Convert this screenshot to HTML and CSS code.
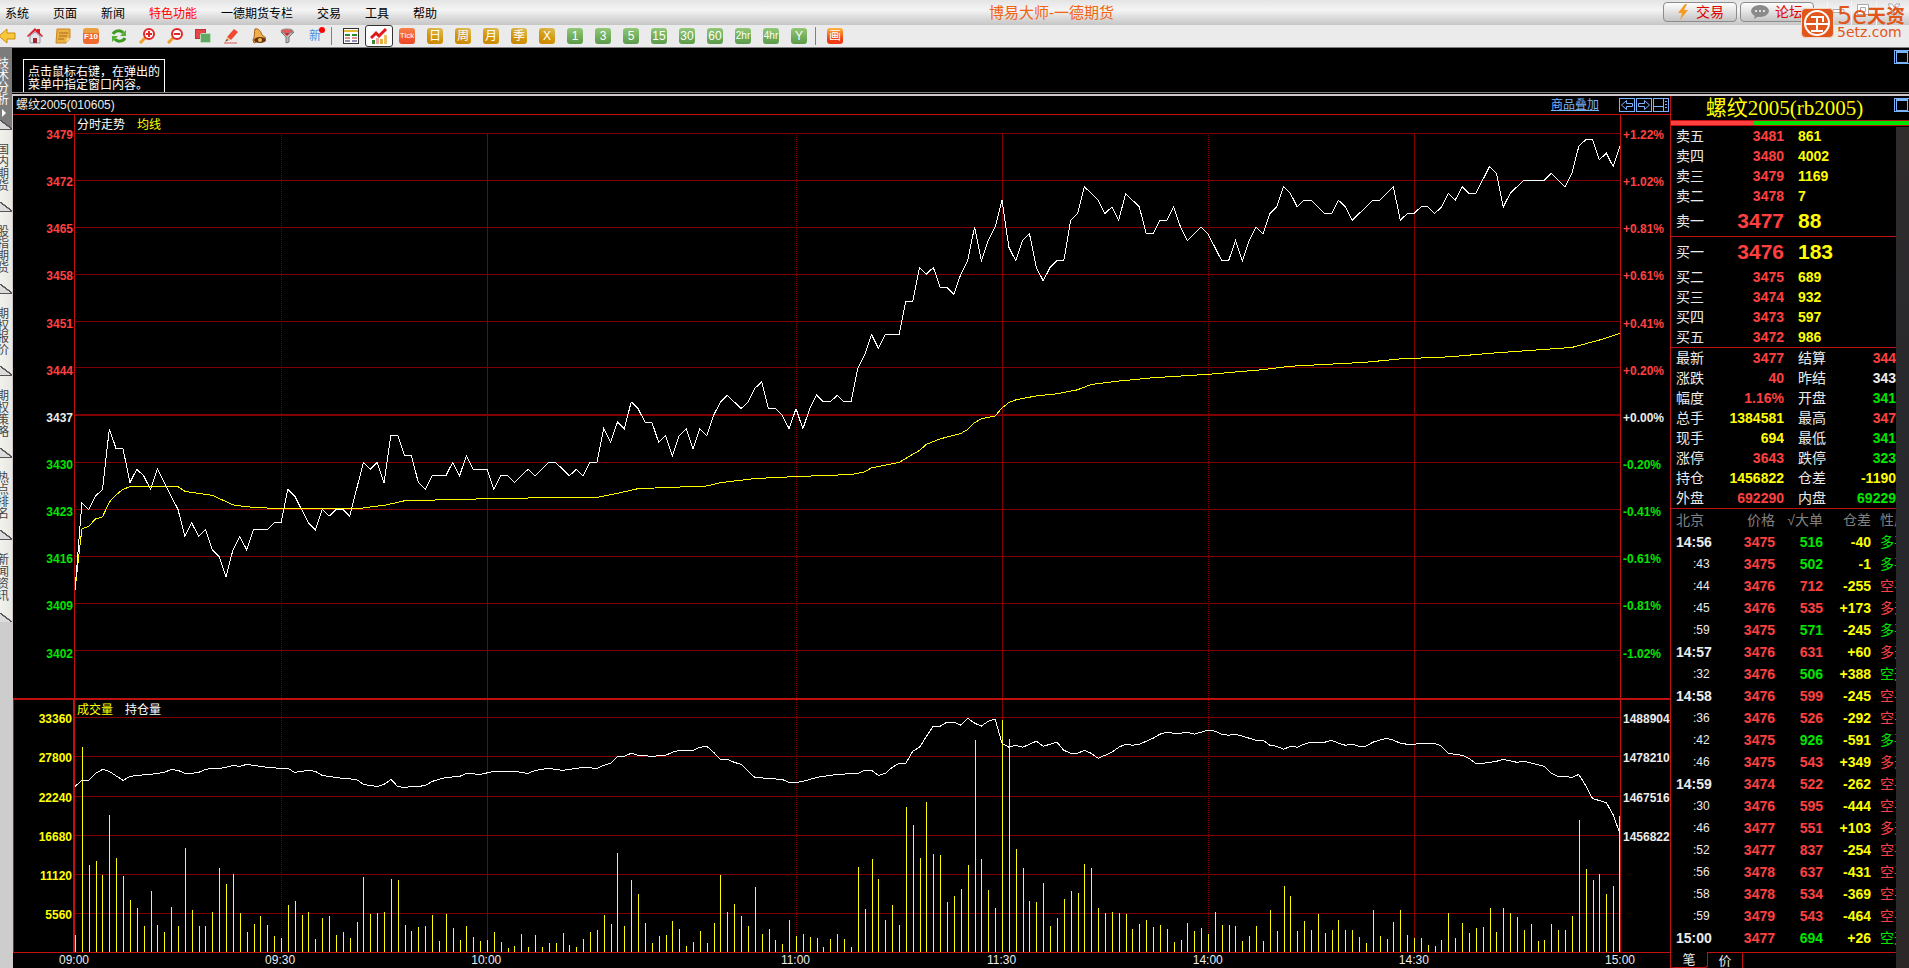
FILE: index.html
```html
<!DOCTYPE html>
<html lang="zh-CN">
<head>
    <meta charset="UTF-8">
    <meta name="viewport" content="width=device-width, initial-scale=1.0">
    <title>博易大师-一德期货</title>
    <link rel="stylesheet" href="styles.css">
</head>
<body>

<header class="menubar">
    <nav class="menu">
        <a href="#">系统</a>
        <a href="#">页面</a>
        <a href="#">新闻</a>
        <a href="#" class="hot">特色功能</a>
        <a href="#">一德期货专栏</a>
        <a href="#">交易</a>
        <a href="#">工具</a>
        <a href="#">帮助</a>
    </nav>
    <h1 class="app-title">博易大师-一德期货</h1>
    <div class="menu-right">
        <button class="pill">
            <svg width="14" height="16" viewBox="0 0 14 16"><path d="M9 0 2 9h4l-2 7 8-10H8l3-6z" fill="#f59a23"/></svg>
            交易
        </button>
        <button class="pill">
            <svg width="18" height="14" viewBox="0 0 18 14"><ellipse cx="9" cy="6" rx="9" ry="6" fill="#8a8a8a"/><path d="M4 10 3 14l5-3z" fill="#8a8a8a"/><circle cx="5" cy="6" r="1" fill="#fff"/><circle cx="9" cy="6" r="1" fill="#fff"/><circle cx="13" cy="6" r="1" fill="#fff"/></svg>
            论坛
        </button>
        <div class="window-controls">
            <svg width="82" height="24" viewBox="0 0 82 24" fill="none">
                <path d="M0.500 0v24M24.500 0v24M49.500 0v24" stroke="#f6f6f6"/>
                <path d="M6 8.500h11v3H6z" fill="#fff" stroke="#aaa"/>
                <path d="M30.500 3.500h11v10h-11zM33.500 6.500h5v4h-5z" fill="#fff" stroke="#aaa"/>
                <path d="M61 3h4l2 3 2-3h4l-4 6 4 5h-4l-2-3-2 3h-4l4-5z" fill="#fff" stroke="#aaa"/>
            </svg>
        </div>
    </div>
</header>

<div class="watermark">
    <svg width="33" height="30" viewBox="0 0 33 30">
        <rect x="0.500" y="0.500" width="32" height="29" rx="4" fill="#e0561b" stroke="#f6d4c2"/>
        <circle cx="16" cy="15" r="12" fill="none" stroke="#fff" stroke-width="2"/>
        <path d="M10 9h12v5M5 16h23M16 9v15M10 23h12" stroke="#fff" stroke-width="2" fill="none"/>
    </svg>
    <div class="watermark-text">
        <strong>5e<span>天资</span></strong>
        <small>5etz.com</small>
    </div>
</div>

<div class="toolbar">
    <button aria-label="后退"><svg width="18" height="16" viewBox="0 0 18 16"><path d="M7 1v4h8v6H7v4L-1 8z" fill="#f8c83c" stroke="#c98a10"/></svg></button>
    <button aria-label="主页"><svg width="16" height="16" viewBox="0 0 16 16"><path d="M3 8v7h10V8L8 4z" fill="#e4e4ea" stroke="#99a"/><path d="M0 8 8 0l2 2V1h3v4l3 3-1 1-7-6-7 6z" fill="#d81e28"/><path d="M6 10h4v5H6z" fill="#a0262c"/></svg></button>
    <button aria-label="便笺"><svg width="16" height="16" viewBox="0 0 16 16"><path d="M2 1h13v9l-4 5H1z" fill="#eab043" stroke="#c98722"/><path d="M4 5h9M4 8h8M3 11h6" stroke="#a8691a"/><path d="m11 15 1-5h3z" fill="#fbe09a"/></svg></button>
    <button aria-label="F10"><span class="badge f10">F10</span></button>
    <button aria-label="刷新"><svg width="16" height="16" viewBox="0 0 16 16" fill="none" stroke="#3d9b22" stroke-width="3"><path d="M2 6c2-4 8-4 10-1M14 10c-2 4-8 4-10 1"/><path d="M15 2v6H9zM1 14V8h6z" fill="#56b032" stroke="none"/></svg></button>
    <button aria-label="放大"><svg width="16" height="16" viewBox="0 0 16 16"><path d="m7 9-6 6" stroke="#f0a020" stroke-width="3"/><circle cx="10" cy="6" r="5" fill="#fff" stroke="#e02828" stroke-width="2"/><path d="M7 6h6M10 3v6" stroke="#e02828" stroke-width="2"/></svg></button>
    <button aria-label="缩小"><svg width="16" height="16" viewBox="0 0 16 16"><path d="m7 9-6 6" stroke="#f0a020" stroke-width="3"/><circle cx="10" cy="6" r="5" fill="#fff" stroke="#e02828" stroke-width="2"/><path d="M7 6h6" stroke="#e02828" stroke-width="2"/></svg></button>
    <button aria-label="叠加"><svg width="16" height="16" viewBox="0 0 16 16"><rect x="0.500" y="1.500" width="10" height="9" fill="#e8454a" stroke="#b33"/><rect x="5.500" y="5.500" width="10" height="9" rx="1" fill="#62a968" stroke="#b8dcb8"/></svg></button>
    <button aria-label="画笔"><svg width="16" height="16" viewBox="0 0 16 16"><path d="M4 9 11 1l4 3-7 8z" fill="#ee4a32"/><path d="m4 9 4 3-6 2z" fill="#f1c58a"/><path d="m2 14 2-3 1 1z" fill="#333"/><path d="M1 15h13" stroke="#d55"/></svg></button>
    <button aria-label="预警"><svg width="16" height="16" viewBox="0 0 16 16"><path d="M4 1c4-1 6 3 7 6l4 3-12 5-1-3c2-3 1-8 2-11z" fill="#efb04a" stroke="#a2611a"/><ellipse cx="9" cy="12" rx="6" ry="3" fill="#6b3313"/><circle cx="9" cy="12" r="2" fill="#f2c14e"/></svg></button>
    <button aria-label="筛选"><svg width="16" height="16" viewBox="0 0 16 16"><path d="m2 4 5 5v6l3-1V9l5-5z" fill="#b9b9bd" stroke="#777"/><ellipse cx="8" cy="3" rx="6" ry="2" fill="#e85a5a" stroke="#888"/><path d="m5 5 3 3 3-3z" fill="#d22"/></svg></button>
    <button class="news" aria-label="新"><span>新</span></button>
    <i class="sep"></i>
    <button aria-label="报价列表"><svg width="16" height="16" viewBox="0 0 16 16"><rect x="0.500" y="0.500" width="15" height="15" fill="#fff" stroke="#333"/><path d="M1 3h14" stroke="#e8b830" stroke-width="2"/><path d="M2 7h5M9 7h5" stroke="#2a8f2a" stroke-width="2"/><path d="M2 10h5M9 10h5" stroke="#c22" stroke-width="1"/><path d="M2 13h5M9 13h5" stroke="#226" stroke-width="1"/></svg></button>
    <button class="selected" aria-label="分时图"><svg width="18" height="18" viewBox="0 0 18 18"><path d="m1 11 5-5 3 3 7-7" fill="none" stroke="#e01818" stroke-width="3"/><path d="M2 13h3v4H2z" fill="#3a8a3a"/><path d="M6 11h3v6H6z" fill="#f1a4a0"/><path d="M10 12h3v5h-3z" fill="#e4b23c"/><path d="M14 8h3v9h-3z" fill="#f0c060"/></svg></button>
    <button><span class="badge tick">Tick</span></button>
    <button><span class="badge gold">日</span></button>
    <button><span class="badge gold">周</span></button>
    <button><span class="badge gold">月</span></button>
    <button><span class="badge gold">季</span></button>
    <button><span class="badge gold">X</span></button>
    <button><span class="badge green">1</span></button>
    <button><span class="badge green">3</span></button>
    <button><span class="badge green">5</span></button>
    <button><span class="badge green">15</span></button>
    <button><span class="badge green">30</span></button>
    <button><span class="badge green">60</span></button>
    <button><span class="badge green small">2hr</span></button>
    <button><span class="badge green small">4hr</span></button>
    <button><span class="badge green">Y</span></button>
    <i class="sep"></i>
    <button><span class="badge tick draw">画</span></button>
</div>

<div class="workspace">
    <nav class="side-tabs">
        <a href="#" class="active"><span>技术分析</span><b></b></a>
        <a href="#"><span>国内期货</span></a>
        <a href="#"><span>股指期货</span></a>
        <a href="#"><span>期权报价</span></a>
        <a href="#"><span>期权策略</span></a>
        <a href="#"><span>热点排名</span></a>
        <a href="#"><span>新闻资讯</span></a>
    </nav>

    <div class="content">
        <section class="hint-pane">
            <p class="hint">点击鼠标右键，在弹出的<br>菜单中指定窗口内容。</p>
            <button class="win-btn" aria-label="最大化"></button>
        </section>

        <main class="panes">
            <section class="chart-pane">
                <div class="chart-head">
                    <span>螺纹2005(010605)</span>
                    <a href="#" class="overlay-link">商品叠加</a>
                    <div class="chart-tools">
                        <button aria-label="左移"><svg width="14" height="12" viewBox="0 0 14 12"><path d="M6.500 1.500v3h6v3h-6v3l-5-4.500z"/></svg></button>
                        <button aria-label="右移"><svg width="14" height="12" viewBox="0 0 14 12"><path d="M7.500 1.500v3h-6v3h6v3l5-4.500z"/></svg></button>
                        <button aria-label="分栏"><svg width="14" height="12" viewBox="0 0 14 12"><path d="M0 7.500h9M9.500 0v12M11 2.500h2M11 5.500h2M11 8.500h2"/></svg></button>
                    </div>
                </div>

                <div class="price-row">
                    <div class="axis axis-left" id="priceAxis"></div>
                    <div class="plot">
                        <svg id="priceChart" viewBox="0 0 1545 584" preserveAspectRatio="none"></svg>
                        <p class="legend">分时走势 <span class="yellow">均线</span></p>
                    </div>
                    <div class="axis axis-right" id="percentAxis"></div>
                </div>

                <div class="volume-row">
                    <div class="axis axis-left yellow" id="volumeAxis"></div>
                    <div class="plot">
                        <svg id="volumeChart" viewBox="0 0 1545 251" preserveAspectRatio="none"></svg>
                        <p class="legend"><span class="yellow">成交量</span> 持仓量</p>
                    </div>
                    <div class="axis axis-right" id="interestAxis"></div>
                </div>

                <div class="time-row" id="timeAxis"></div>
            </section>

            <aside class="quote-pane">
                <div class="quote-head">
                    <h2>螺纹2005(rb2005)</h2>
                    <button class="win-btn" aria-label="最大化"></button>
                </div>
                <div class="ratio"><span></span></div>

                <div class="quote-body">
                    <div class="quote-data">
                        <table class="book">
                            <tr><th>卖五</th><td>3481</td><td>861</td></tr>
                            <tr><th>卖四</th><td>3480</td><td>4002</td></tr>
                            <tr><th>卖三</th><td>3479</td><td>1169</td></tr>
                            <tr><th>卖二</th><td>3478</td><td>7</td></tr>
                            <tr class="best"><th>卖一</th><td>3477</td><td>88</td></tr>
                        </table>
                        <table class="book">
                            <tr class="best"><th>买一</th><td>3476</td><td>183</td></tr>
                            <tr><th>买二</th><td>3475</td><td>689</td></tr>
                            <tr><th>买三</th><td>3474</td><td>932</td></tr>
                            <tr><th>买四</th><td>3473</td><td>597</td></tr>
                            <tr><th>买五</th><td>3472</td><td>986</td></tr>
                        </table>
                        <table class="stats">
                            <tr><th>最新</th><td class="red">3477</td><th>结算</th><td class="red">344</td></tr>
                            <tr><th>涨跌</th><td class="red">40</td><th>昨结</th><td>343</td></tr>
                            <tr><th>幅度</th><td class="red">1.16%</td><th>开盘</th><td class="green-text">341</td></tr>
                            <tr><th>总手</th><td class="yellow">1384581</td><th>最高</th><td class="red">347</td></tr>
                            <tr><th>现手</th><td class="yellow">694</td><th>最低</th><td class="green-text">341</td></tr>
                            <tr><th>涨停</th><td class="red">3643</td><th>跌停</th><td class="green-text">323</td></tr>
                            <tr><th>持仓</th><td class="yellow">1456822</td><th>仓差</th><td class="yellow">-1190</td></tr>
                            <tr><th>外盘</th><td class="red">692290</td><th>内盘</th><td class="green-text">69229</td></tr>
                        </table>
                        <table class="ticks">
                            <thead>
                                <tr><th>北京</th><th>价格</th><th>√大单</th><th>仓差</th><th>性质</th></tr>
                            </thead>
                            <tbody id="ticks"></tbody>
                        </table>
                        <div class="quote-tabs">
                            <button class="on">笔</button>
                            <button>价</button>
                            <i></i>
                        </div>
                    </div>
                    <div class="scroll-strip"></div>
                </div>
            </aside>
        </main>
    </div>
</div>

<script src="chart.js"></script>
</body>
</html>
```
FILE: styles.css
```css
* {
    box-sizing: border-box;
}

body {
    margin: 0;
    height: 100vh;
    display: flex;
    flex-direction: column;
    overflow: hidden;
    background: #000;
    color: #ececec;
    font-family: "Liberation Sans", "Noto Sans CJK SC", sans-serif;
    font-size: 12px;
    line-height: 14px;
}

h1, h2, p {
    margin: 0;
    font-weight: normal;
}

a {
    color: inherit;
    text-decoration: none;
}

button {
    margin: 0;
    padding: 0;
    border: 0;
    background: none;
    color: inherit;
    font: inherit;
    cursor: pointer;
}

svg {
    display: block;
}

.red { color: #ff4040; }
.green-text { color: #00e600; }
.yellow { color: #ffff00; }

/* menu bar */
.menubar {
    flex: none;
    height: 25px;
    display: grid;
    grid-template-columns: 1fr auto 1fr;
    align-items: center;
    background: linear-gradient(#e4e4e4, #f4f4f4 40%, #dcdcdc 70%, #c6c6c6);
    color: #000;
}

.menu {
    display: flex;
    gap: 24px;
    padding: 2px 0 0 5px;
}

.hot {
    color: #ff0000;
}

.app-title {
    padding-left: 194px;
    color: #f06414;
    font-size: 15px;
}

.menu-right {
    display: flex;
    justify-content: flex-end;
    gap: 3px;
}

.pill {
    width: 74px;
    height: 20px;
    display: flex;
    align-items: center;
    justify-content: center;
    gap: 6px;
    margin-top: 1px;
    border: 1px solid #8c8c8c;
    border-radius: 4px;
    background: linear-gradient(#fdfdfd, #e2e2e2 50%, #c4c4c4);
    color: #e00000;
    font-size: 14px;
}

.window-controls {
    margin-left: 10px;
}

.watermark {
    position: absolute;
    top: 8px;
    right: 4px;
    display: flex;
    gap: 3px;
    color: #e0561b;
}

.watermark-text {
    width: 68px;
}

.watermark-text strong,
.watermark-text small {
    display: block;
    white-space: nowrap;
}

.watermark-text strong {
    display: flex;
    height: 17px;
    font-family: "DejaVu Sans", "Noto Sans CJK SC", sans-serif;
    font-size: 24px;
    line-height: 17px;
    font-weight: normal;
}

.watermark-text strong span {
    font-size: 19px;
    font-weight: bold;
}

.watermark-text small {
    font-family: "DejaVu Sans", sans-serif;
    font-size: 14px;
    line-height: 14px;
}

/* toolbar */
.toolbar {
    flex: none;
    height: 23px;
    display: flex;
    align-items: center;
    border-bottom: 1px solid #808080;
    background: #ebebeb;
    overflow: hidden;
}

.toolbar button {
    width: 28px;
    height: 22px;
    flex: none;
    display: flex;
    align-items: center;
    justify-content: center;
}

.toolbar button:first-child {
    width: 21px;
    justify-content: flex-start;
}

.toolbar .sep {
    width: 1px;
    height: 18px;
    margin: 0 5px 0 2px;
    background: #808080;
}

.toolbar .selected {
    border: 1px solid #333;
    border-radius: 3px;
    background: #fff;
}

.badge {
    width: 16px;
    height: 16px;
    border-radius: 3px;
    color: #fff;
    font-size: 12px;
    line-height: 16px;
    text-align: center;
    overflow: hidden;
    white-space: nowrap;
}

.gold { background: linear-gradient(200deg, #dcc060, #d2960a 60%, #c88400); }
.green { background: linear-gradient(#92c878, #5a9a48); }
.tick { background: linear-gradient(#f88048, #ee4422); font-size: 8px; }
.draw { background: linear-gradient(#ffb43c, #f03c14 70%); font-size: 12px; }
.f10 { background: linear-gradient(#e8a040 30%, #f06a30 30%); font-size: 8px; font-weight: bold; line-height: 18px; }
.small { font-size: 10px; }

.news span {
    position: relative;
    color: #4a90e2;
    font-size: 12px;
}

.news span::after {
    content: "";
    position: absolute;
    top: -2px;
    right: -4px;
    width: 6px;
    height: 6px;
    border-radius: 50%;
    background: #ff0000;
}

/* workspace */
.workspace {
    flex: 1;
    min-height: 0;
    display: flex;
}

.side-tabs {
    flex: none;
    width: 12px;
    background: #cdcdcd;
    overflow: hidden;
}

.side-tabs a {
    position: relative;
    display: block;
    height: 82px;
    padding-top: 14px;
    background: linear-gradient(to right, #f2f2ec, #e8e8e2);
    color: #444;
}

/* slanted lower edge of a tab */
.side-tabs a::after {
    content: "";
    position: absolute;
    bottom: 0;
    left: 0;
    width: 12px;
    height: 9px;
    background: linear-gradient(to top right, #dcdcdc 44%, #555 46%, #555 54%, transparent 56%);
    border-bottom: 1px solid #555;
}

.side-tabs a:last-child::after {
    border-bottom: 0;
}

.side-tabs span {
    display: block;
    width: 12px;
    margin-left: -3px;
    line-height: 12px;
    word-break: break-all;
}

.side-tabs .active {
    padding-top: 10px;
    background: #7c7c7c;
    color: #fff;
}

.side-tabs b {
    display: block;
    width: 0;
    margin: 3px 0 0 2px;
    border: 4px solid transparent;
    border-left-color: #fff;
    border-right: 0;
}

.content {
    flex: 1;
    min-width: 0;
    display: flex;
    flex-direction: column;
}

.hint-pane {
    flex: none;
    height: 45px;
    display: flex;
    justify-content: space-between;
    align-items: flex-start;
    border-bottom: 1px solid #808080;
    overflow: hidden;
}

.hint {
    height: 40px;
    margin: 11px 0 0 11px;
    padding: 6px 4px 0;
    border: 1px solid #fff;
    color: #fff;
    line-height: 13px;
}

.win-btn {
    flex: none;
    width: 15px;
    height: 14px;
    margin-top: 2px;
    border: 1px solid #78b4ff;
    border-right: 0;
    display: grid;
    place-items: center;
}

.win-btn::before {
    content: "";
    width: 10px;
    height: 9px;
    border: 1px solid #78b4ff;
    border-top-width: 2px;
}

.panes {
    flex: 1;
    min-height: 0;
    display: flex;
    margin-top: 1px;
    border-top: 2px solid #d0c8c8;
}

/* chart */
.chart-pane {
    flex: 1;
    min-width: 0;
    display: flex;
    flex-direction: column;
    border-left: 1px solid #d0c8c8;
}

.chart-head {
    flex: none;
    height: 19px;
    display: flex;
    align-items: center;
    padding-left: 3px;
    border-bottom: 1px solid #c01010;
}

.overlay-link {
    margin-left: auto;
    margin-right: 20px;
    color: #78b4ff;
    text-decoration: underline;
}

.chart-tools {
    display: flex;
    gap: 1px;
    padding-right: 1px;
}

.chart-tools button {
    border: 1px solid #78b4ff;
}

.chart-tools svg {
    fill: none;
    stroke: #78b4ff;
}

.price-row,
.volume-row {
    display: flex;
    min-height: 0;
}

.price-row {
    flex: 584 0 0;
}

.volume-row {
    flex: 253 0 0;
    border-top: 2px solid #c01010;
}

.plot {
    position: relative;
    flex: 1;
    min-width: 0;
}

.plot svg {
    position: absolute;
    width: 100%;
    height: 100%;
    shape-rendering: crispEdges;
}

.plot svg * {
    fill: none;
    vector-effect: non-scaling-stroke;
}

.grid { stroke: #800000; }
.grid-zero { stroke: #800000; stroke-width: 2; }
.grid-dotted { stroke: #800000; stroke-dasharray: 1 1; }
.line-white { stroke: #fff; }
.line-yellow { stroke: #ffff00; }

.legend {
    position: absolute;
    top: 3px;
    left: 2px;
    display: flex;
    gap: 12px;
    color: #fff;
}

.axis {
    flex: none;
    display: flex;
    flex-direction: column;
    justify-content: space-between;
    font-weight: bold;
    white-space: nowrap;
}

.axis-left {
    width: 62px;
    padding-right: 1px;
    border-right: 1px solid #c01010;
    text-align: right;
}

.axis-right {
    width: 50px;
    padding-left: 2px;
    border-left: 1px solid #c01010;
}

.price-row .axis {
    padding-top: 13px;
    padding-bottom: 37px;
}

.volume-row .axis {
    display: grid;
    grid-template-rows: repeat(6, 39fr) 17fr;
    justify-content: stretch;
    align-items: center;
}

.volume-row .axis-left {
    border-left: 1px solid #c01010;
    border-right-width: 2px;
}

.time-row {
    flex: none;
    height: 16px;
    display: grid;
    grid-template-columns: repeat(15, 1fr) 0;
    padding: 0 50px 0 61px;
    border-top: 1px solid #c01010;
}

.time-row span {
    width: 0;
    display: flex;
    justify-content: center;
}

/* quotes */
.quote-pane {
    flex: none;
    width: 239px;
    display: flex;
    flex-direction: column;
    border-left: 1px solid #c01010;
}

.quote-head {
    flex: none;
    height: 24px;
    display: flex;
    align-items: flex-start;
}

.quote-head h2 {
    flex: 1;
    padding-left: 4px;
    color: #ffff00;
    font-family: "Liberation Serif", "Noto Sans CJK SC", serif;
    font-size: 21px;
    line-height: 24px;
    text-align: center;
}

.ratio {
    flex: none;
    height: 6px;
    border: solid #c01010;
    border-width: 1px 0;
    background: #00e600;
}

.ratio span {
    display: block;
    width: 35%;
    height: 4px;
    background: #ff4040;
}

.quote-body {
    flex: 1;
    min-height: 0;
    display: flex;
}

.quote-data {
    flex: 1;
    min-width: 0;
    display: flex;
    flex-direction: column;
    overflow: hidden;
}

.scroll-strip {
    flex: none;
    width: 13px;
    margin-top: 1px;
    background: linear-gradient(#302c2c, #26282c 40%, #2c2828);
}

table {
    width: 100%;
    table-layout: fixed;
    border-collapse: collapse;
    border-bottom: 1px solid #c01010;
    font-size: 14px;
    line-height: 20px;
}

th, td {
    height: 20px;
    padding: 0;
    overflow: hidden;
    white-space: nowrap;
}

th {
    padding-left: 5px;
    font-weight: normal;
    text-align: left;
}

td {
    font-weight: bold;
    text-align: right;
}

.book th,
.stats th:first-child {
    width: 47px;
}

.book td:nth-child(2),
.stats td:nth-child(2) {
    width: 66px;
}

.book td:nth-child(2) {
    color: #ff4040;
}

.book td:nth-child(3) {
    padding-left: 14px;
    color: #ffff00;
    text-align: left;
}

.best td {
    height: 30px;
    font-size: 21px;
    line-height: 30px;
}

.stats th:nth-child(3) {
    width: 54px;
    padding-left: 14px;
}

.ticks {
    border-bottom: 0;
    line-height: 22px;
}

.ticks th,
.ticks td {
    height: 22px;
}

.ticks th {
    padding: 0;
    color: #808080;
    text-align: right;
}

.ticks th:nth-child(1) { width: 57px; padding-left: 5px; text-align: left; }
.ticks th:nth-child(2) { width: 47px; }
.ticks th:nth-child(3) { width: 48px; }
.ticks th:nth-child(4) { width: 48px; }
.ticks th:nth-child(5) { padding-left: 9px; text-align: left; }

.ticks td:nth-child(1) {
    padding-left: 5px;
    text-align: left;
}

.ticks td:nth-child(5) {
    padding-left: 9px;
    font-weight: normal;
    text-align: left;
}

.ticks td.second {
    padding-left: 22px;
    font-size: 12px;
    font-weight: normal;
}

.quote-tabs {
    height: 16px;
    margin-top: auto;
    display: flex;
}

.quote-tabs button {
    width: 35px;
    border: solid #c01010;
    border-width: 1px 1px 0 0;
    font-size: 13px;
    line-height: 14px;
}

.quote-tabs .on {
    width: 37px;
    border-width: 0 1px 1px 0;
    border-radius: 0 0 3px 3px;
}

.quote-tabs i {
    flex: 1;
    border-top: 1px solid #c01010;
}
```
FILE: chart.js
```js
// one value per trading minute, 09:00 - 15:00
const prices = [
    3411, 3424, 3423, 3425, 3426, 3435, 3432, 3432, 3427, 3429, 3428, 3426, 3429, 3427, 3425,
    3423, 3419, 3421, 3419, 3420, 3417, 3416, 3413, 3417, 3419, 3417, 3420, 3420, 3420, 3421,
    3421, 3426, 3425, 3423, 3421, 3420, 3423, 3422, 3423, 3423, 3422, 3426, 3430, 3429, 3430,
    3427, 3434, 3434, 3431, 3431, 3427, 3426, 3428, 3428, 3428, 3430, 3428, 3431, 3429, 3429,
    3429, 3426, 3428, 3428, 3427, 3428, 3429, 3428, 3429, 3430, 3430, 3429, 3428, 3429, 3428,
    3430, 3430, 3435, 3433, 3436, 3435, 3439, 3438, 3436, 3436, 3433, 3434, 3431, 3434, 3435,
    3432, 3435, 3434, 3437, 3439, 3440, 3439, 3438, 3439, 3441, 3442, 3438, 3438, 3437, 3435,
    3438, 3435, 3438, 3440, 3439, 3439, 3440, 3439, 3439, 3444, 3446, 3449, 3447, 3449, 3449,
    3449, 3454, 3454, 3459, 3458, 3459, 3456, 3456, 3455, 3458, 3460, 3465, 3460, 3463, 3465,
    3469, 3462, 3460, 3463, 3464, 3459, 3457, 3459, 3460, 3460, 3466, 3467, 3471, 3470, 3469,
    3467, 3468, 3466, 3470, 3469, 3468, 3464, 3464, 3466, 3466, 3468, 3465, 3463, 3464, 3465,
    3464, 3462, 3460, 3460, 3463, 3460, 3463, 3465, 3464, 3467, 3468, 3471, 3470, 3468, 3469,
    3469, 3468, 3467, 3467, 3469, 3468, 3466, 3467, 3468, 3469, 3469, 3470, 3471, 3466, 3467,
    3467, 3468, 3468, 3467, 3468, 3470, 3469, 3471, 3470, 3470, 3472, 3474, 3473, 3468, 3470,
    3471, 3472, 3472, 3472, 3472, 3473, 3472, 3471, 3473, 3477, 3478, 3478, 3475, 3476, 3474,
    3477
];

// [minute, average price]
const average = [
    [0, 3411], [1, 3420.1], [2, 3420.5], [3, 3421.6], [4, 3421.9], [5, 3424.1], [6, 3425.2],
    [7, 3426], [8, 3426.4], [15, 3426.4], [16, 3425.7], [20, 3425.1], [23, 3423.7], [25, 3423.4],
    [30, 3423.1], [33, 3423.2], [35, 3423.1], [41, 3423.1], [44, 3423.5], [45, 3423.6], [48, 3424.3],
    [60, 3424.6], [71, 3424.8], [76, 3424.8], [79, 3425.4], [82, 3426.1], [92, 3426.5], [94, 3427],
    [99, 3427.6], [105, 3427.9], [113, 3428.2], [115, 3428.6], [116, 3429.2], [120, 3430],
    [122, 3431.2], [123, 3431.8], [124, 3432.7], [126, 3433.5], [129, 3434.3], [130, 3434.9],
    [131, 3435.9], [132, 3436.5], [134, 3436.9], [135, 3438.1], [136, 3438.9], [137, 3439.3],
    [140, 3439.9], [143, 3440.2], [146, 3440.8], [148, 3441.6], [152, 3442.1], [157, 3442.6],
    [165, 3443.1], [173, 3443.8], [177, 3444.3], [188, 3444.9], [193, 3445.4], [200, 3445.7],
    [207, 3446.3], [218, 3447.1], [222, 3448.2], [225, 3449.2]
];

// bar heights, 39 units per 5560 lots
const volumes = [
    17, 204, 87, 91, 77, 137, 94, 76, 52, 44, 26, 61, 27, 20, 45, 26, 104, 42, 26, 26, 40, 84, 68, 78, 39,
    20, 28, 36, 27, 16, 14, 47, 51, 37, 40, 13, 34, 36, 17, 20, 14, 30, 75, 38, 39, 40, 73, 72, 27, 21,
    25, 26, 37, 11, 38, 24, 12, 26, 15, 11, 12, 20, 10, 4, 6, 18, 5, 17, 5, 9, 9, 19, 7, 5, 13,
    20, 22, 37, 28, 99, 26, 72, 58, 29, 9, 16, 17, 31, 23, 6, 10, 21, 9, 29, 77, 40, 48, 36, 26, 65,
    18, 23, 12, 8, 32, 16, 18, 15, 14, 5, 13, 18, 13, 5, 85, 43, 93, 73, 32, 47, 27, 145, 127, 94, 150,
    98, 97, 50, 56, 63, 87, 211, 93, 62, 44, 231, 212, 103, 84, 51, 50, 69, 26, 34, 53, 61, 59, 88, 84, 44,
    39, 40, 39, 38, 23, 28, 32, 25, 27, 23, 10, 12, 29, 21, 24, 18, 40, 27, 27, 26, 11, 16, 26, 11, 42,
    21, 66, 56, 21, 31, 22, 38, 19, 22, 32, 22, 22, 15, 9, 42, 16, 13, 30, 42, 17, 14, 14, 7, 6, 12,
    39, 14, 29, 19, 24, 25, 44, 20, 44, 39, 35, 22, 28, 11, 12, 28, 22, 22, 36, 132, 83, 72, 78, 58, 66,
    136
];

// [minute, height] of the open interest line
const interest = [
    [0, 165], [1, 171], [2, 171], [3, 178], [4, 182], [5, 180], [7, 171], [8, 175], [9, 176], [11, 177],
    [13, 179], [14, 182], [15, 181], [16, 178], [17, 178], [18, 179], [19, 182], [20, 183], [21, 183],
    [22, 184], [23, 186], [24, 185], [25, 187], [26, 186], [28, 184], [30, 183], [31, 183], [32, 179],
    [34, 181], [35, 180], [36, 176], [37, 175], [39, 173], [41, 172], [42, 167], [44, 165], [45, 167],
    [46, 172], [47, 165], [48, 164], [49, 165], [50, 165], [51, 166], [52, 170], [54, 174], [56, 175],
    [57, 178], [59, 177], [61, 180], [64, 180], [66, 178], [67, 181], [69, 183], [71, 181], [74, 184],
    [76, 183], [77, 186], [78, 188], [79, 195], [80, 195], [81, 198], [82, 196], [84, 195], [86, 196],
    [87, 199], [88, 201], [90, 201], [91, 204], [92, 205], [93, 199], [94, 192], [95, 192], [96, 189],
    [97, 187], [99, 174], [101, 173], [103, 172], [104, 169], [105, 169], [106, 170], [108, 174],
    [111, 177], [114, 178], [115, 181], [116, 181], [117, 176], [118, 178], [119, 184], [120, 188],
    [121, 188], [122, 200], [123, 204], [124, 215], [125, 225], [126, 225], [127, 229], [128, 229],
    [129, 226], [130, 233], [131, 228], [132, 225], [133, 230], [134, 232], [135, 208], [136, 204],
    [137, 206], [138, 204], [139, 207], [140, 210], [141, 205], [142, 207], [143, 209], [144, 201],
    [145, 198], [146, 198], [147, 201], [148, 198], [149, 193], [150, 196], [151, 199], [152, 204],
    [153, 207], [154, 206], [155, 207], [156, 210], [157, 213], [158, 217], [159, 219], [160, 218],
    [161, 218], [162, 219], [163, 217], [164, 219], [165, 221], [166, 220], [167, 217], [168, 216],
    [169, 217], [170, 215], [172, 211], [173, 211], [174, 206], [175, 205], [176, 202], [177, 205],
    [178, 204], [179, 207], [180, 209], [182, 209], [183, 211], [184, 208], [185, 206], [186, 207],
    [187, 205], [188, 205], [189, 209], [190, 211], [191, 213], [192, 211], [193, 208], [194, 207],
    [195, 207], [196, 208], [198, 208], [199, 205], [200, 198], [202, 196], [203, 193], [204, 188],
    [205, 188], [207, 190], [208, 192], [210, 189], [211, 190], [214, 185], [215, 178], [216, 175],
    [217, 175], [218, 174], [219, 177], [220, 166], [221, 153], [222, 151], [223, 149], [224, 137],
    [225, 118]
];

// time, price, size, size colour, position change, type
const ticks = [
    ['14:56', 3475, 516, 'green-text', '-40', '多平'],
    [':43', 3475, 502, 'green-text', '-1', '多平'],
    [':44', 3476, 712, 'red', '-255', '空平'],
    [':45', 3476, 535, 'red', '+173', '多开'],
    [':59', 3475, 571, 'green-text', '-245', '多平'],
    ['14:57', 3476, 631, 'red', '+60', '多开'],
    [':32', 3476, 506, 'green-text', '+388', '空开'],
    ['14:58', 3476, 599, 'red', '-245', '空平'],
    [':36', 3476, 526, 'red', '-292', '空平'],
    [':42', 3475, 926, 'green-text', '-591', '多平'],
    [':46', 3475, 543, 'red', '+349', '多开'],
    ['14:59', 3474, 522, 'red', '-262', '空平'],
    [':30', 3476, 595, 'red', '-444', '空平'],
    [':46', 3477, 551, 'red', '+103', '多开'],
    [':52', 3477, 837, 'red', '-254', '空平'],
    [':56', 3478, 637, 'red', '-431', '空平'],
    [':58', 3478, 534, 'red', '-369', '空平'],
    [':59', 3479, 543, 'red', '-464', '空平'],
    ['15:00', 3477, 694, 'green-text', '+26', '空开']
];

const MINUTES = 225;
const WIDTH = 1545;
const BASE = 251;

const x = minute => minute * WIDTH / MINUTES;
const priceY = price => 18 + (3479 - price) * 6.74;

function path(cls, d) {
    return `<path class="${cls}" d="${d}"/>`;
}

function line(cls, points) {
    return `<polyline class="${cls}" points="${points.map(p => p.join()).join(' ')}"/>`;
}

function verticals(top, height) {
    let out = '';
    [30, 60, 105, 135, 165, 195].forEach((minute, i) => {
        out += path(i % 2 ? 'grid' : 'grid-dotted', `M${Math.round(x(minute))}.5 ${top}V${height}`);
    });
    return out;
}

function drawPrice() {
    let out = verticals(18, 584);
    for (let p = 3479; p >= 3402; p -= 7) {
        out += path(p === 3437 ? 'grid-zero' : 'grid', `M0 ${Math.round(priceY(p) - 0.5) + (p === 3437 ? 0 : 0.5)}H${WIDTH}`);
    }
    out += line('line-yellow', average.map(([m, p]) => [x(m), priceY(p)]));
    out += line('line-white', prices.map((p, m) => [x(m), priceY(p)]));
    document.getElementById('priceChart').innerHTML = out;
}

function drawVolume() {
    let out = verticals(0, BASE);
    for (let i = 0; i < 6; i++) {
        out += path('grid', `M0 ${17.5 + i * 39}H${WIDTH}`);
    }
    out += path('line-yellow', volumes.map((v, m) => `M${Math.min(Math.round(x(m)), WIDTH - 1)}.5 ${BASE}v${-v}`).join(''));
    out += line('line-white', interest.map(([m, h]) => [x(m), BASE - h]));
    document.getElementById('volumeChart').innerHTML = out;
}

function fill(id, items) {
    document.getElementById(id).innerHTML = items.join('');
}

function drawAxes() {
    const left = [];
    const right = [];
    const percents = ['+1.22', '+1.02', '+0.81', '+0.61', '+0.41', '+0.20', '+0.00', '-0.20', '-0.41', '-0.61', '-0.81', '-1.02'];
    percents.forEach((pct, i) => {
        const cls = i < 6 ? 'red' : i > 6 ? 'green-text' : '';
        left.push(`<span class="${cls}">${3479 - i * 7}</span>`);
        right.push(`<span class="${cls}">${pct}%</span>`);
    });
    fill('priceAxis', left);
    fill('percentAxis', right);
    fill('volumeAxis', [33360, 27800, 22240, 16680, 11120, 5560].map(v => `<span>${v}</span>`));
    fill('interestAxis', [1488904, 1478210, 1467516, 1456822].map(v => `<span>${v}</span>`));

    const times = { '09:00': 0, '09:30': 30, '10:00': 60, '11:00': 105, '11:30': 135, '14:00': 165, '14:30': 195, '15:00': 225 };
    fill('timeAxis', Object.keys(times).map(t => `<span style="grid-column: ${times[t] / 15 + 1}">${t}</span>`));
}

function drawTicks() {
    fill('ticks', ticks.map(([time, price, size, cls, change, type]) => `
        <tr>
            <td class="${time.startsWith(':') ? 'second' : ''}">${time}</td>
            <td class="red">${price}</td>
            <td class="${cls}">${size}</td>
            <td class="yellow">${change}</td>
            <td class="${cls}">${type}</td>
        </tr>`));
}

drawPrice();
drawVolume();
drawAxes();
drawTicks();
```
